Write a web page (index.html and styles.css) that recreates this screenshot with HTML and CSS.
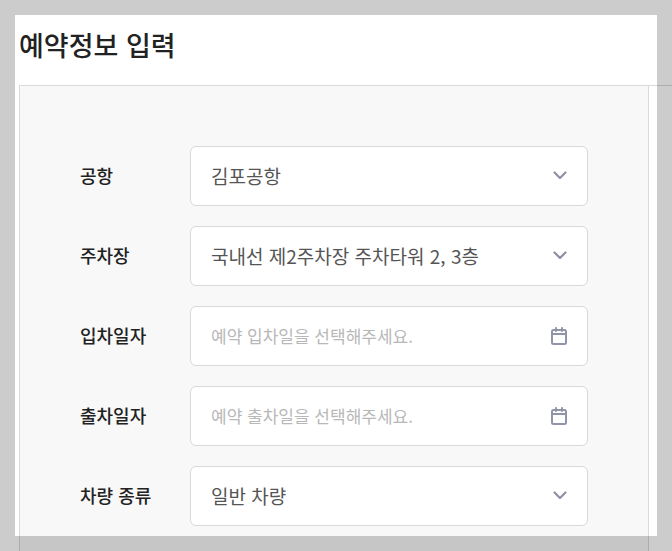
FILE: index.html
```html
<!DOCTYPE html>
<html lang="ko">
<head>
<meta charset="utf-8">
<meta name="viewport" content="width=device-width, initial-scale=1">
<title>예약정보 입력</title>
<link rel="stylesheet" href="styles.css">
</head>
<body>
<svg class="sprite" aria-hidden="true">
  <symbol id="chevron" viewBox="0 0 20 20"><path d="M4.500 6.500L10 12l5.500-5.500" fill="none" stroke="currentColor" stroke-width="2.200" stroke-linecap="round" stroke-linejoin="round"/></symbol>
  <symbol id="calendar" viewBox="0 0 20 20"><path d="M4.500 4h11A1.500 1.500 0 0 1 17 5.500v11a1.500 1.500 0 0 1-1.500 1.500h-11A1.500 1.500 0 0 1 3 16.500v-11A1.500 1.500 0 0 1 4.500 4zM3 8h14M7 2v3M13 2v3" fill="none" stroke="currentColor" stroke-width="2" stroke-linecap="round" stroke-linejoin="round"/></symbol>
</svg>
<main class="page">
  <h1 class="title">예약정보 입력</h1>
  <div class="section">
    <form class="panel">
      <div class="row">
        <label class="label" for="airport">공항</label>
        <div class="field">
          <select class="control" id="airport"><option>김포공항</option></select>
          <svg class="chevron" aria-hidden="true"><use href="#chevron"/></svg>
        </div>
      </div>
      <div class="row">
        <label class="label" for="lot">주차장</label>
        <div class="field">
          <select class="control" id="lot"><option>국내선 제2주차장 주차타워 2, 3층</option></select>
          <svg class="chevron" aria-hidden="true"><use href="#chevron"/></svg>
        </div>
      </div>
      <div class="row">
        <label class="label" for="in-date">입차일자</label>
        <div class="field">
          <input class="control" id="in-date" type="text" placeholder="예약 입차일을 선택해주세요.">
          <button class="picker" type="button" aria-labelledby="in-date"><svg class="calendar" aria-hidden="true"><use href="#calendar"/></svg></button>
        </div>
      </div>
      <div class="row">
        <label class="label" for="out-date">출차일자</label>
        <div class="field">
          <input class="control" id="out-date" type="text" placeholder="예약 출차일을 선택해주세요.">
          <button class="picker" type="button" aria-labelledby="out-date"><svg class="calendar" aria-hidden="true"><use href="#calendar"/></svg></button>
        </div>
      </div>
      <div class="row">
        <label class="label" for="car">차량 종류</label>
        <div class="field">
          <select class="control" id="car"><option>일반 차량</option></select>
          <svg class="chevron" aria-hidden="true"><use href="#chevron"/></svg>
        </div>
      </div>
    </form>
  </div>
</main>
<div class="shade"></div>
</body>
</html>
```

FILE: styles.css
```css
* {
  box-sizing: border-box;
}

body {
  margin: 0;
  background: #fff;
  color: #222;
  font-family: "Noto Sans CJK KR", sans-serif;
}

.sprite {
  position: absolute;
  width: 0;
  height: 0;
}

.page {
  height: 100vh;
  overflow: hidden;
  padding: 25px 0 0 19px;
}

.title {
  margin: 0 0 20px;
  font-size: 27px;
  font-weight: 500;
  line-height: 40px;
}

.section {
  border-top: 1px solid #d9d9d9;
}

.panel {
  display: flex;
  flex-direction: column;
  gap: 20px;
  margin-right: 23px;
  padding: 60px;
  border: 1px solid #d9d9d9;
  border-top: 0;
  background: #f8f8f8;
}

.row {
  display: grid;
  grid-template-columns: 110px 1fr;
  align-items: center;
}

.label {
  padding-bottom: 2px;
  font-size: 18px;
  font-weight: 500;
  line-height: 28px;
}

.field {
  display: flex;
  align-items: center;
  position: relative;
  height: 60px;
  border: 1px solid #d9d9d9;
  border-radius: 6px;
  background: #fff;
}

.control {
  appearance: none;
  width: 100%;
  height: 100%;
  padding: 0 56px 2px 20px;
  border: 0;
  border-radius: 6px;
  background: transparent;
  color: #555;
  font-family: inherit;
  font-size: 19px;
}

input.control {
  font-size: 17px;
}

.control::placeholder {
  color: #b8b8b8;
  opacity: 1;
}

.chevron {
  position: absolute;
  right: 17px;
  width: 20px;
  height: 20px;
  color: #8f90a6;
  pointer-events: none;
}

.picker {
  position: absolute;
  right: 18px;
  display: flex;
  padding: 0;
  border: 0;
  background: transparent;
  color: #8f95a6;
}

.calendar {
  width: 20px;
  height: 20px;
}

.shade {
  position: fixed;
  inset: 0;
  border: 15px solid rgba(0, 0, 0, 0.2);
  pointer-events: none;
}
```
